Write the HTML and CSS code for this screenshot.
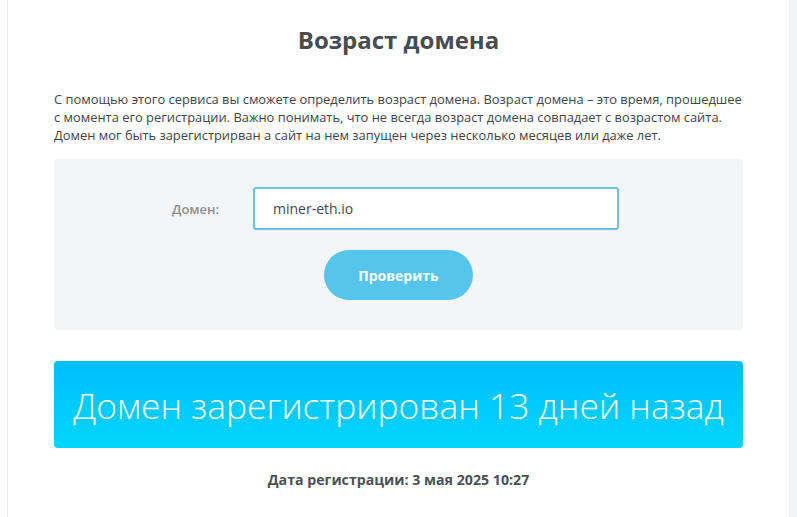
FILE: index.html
```html
<!DOCTYPE html>
<html lang="ru">
<head>
    <meta charset="UTF-8">
    <title>Возраст домена</title>
    <link rel="stylesheet" href="styles.css">
</head>
<body>

    <div class="page">
        <!-- основной блок -->
        <div class="content">
            <h1>Возраст домена</h1>

            <p class="intro">С помощью этого сервиса вы сможете определить возраст домена. Возраст домена – это время, прошедшее с момента его регистрации. Важно понимать, что не всегда возраст домена совпадает с возрастом сайта. Домен мог быть зарегистрирван а сайт на нем запущен через несколько месяцев или даже лет.</p>

            <!-- форма проверки -->
            <form class="check-form" onsubmit="return false">
                <div class="form-row">
                    <label for="domain">Домен:</label>
                    <input type="text" id="domain" name="domain" value="miner-eth.io">
                </div>
                <button type="submit">Проверить</button>
            </form>

            <!-- результат -->
            <div class="result">Домен зарегистрирован 13 дней назад</div>
            <p class="reg-date">Дата регистрации: 3 мая 2025 10:27</p>
        </div>

        <div class="sidebar"></div>
    </div>

</body>
</html>
```

FILE: styles.css
```css
body {
    font-family: "Open Sans", "Liberation Sans", sans-serif;
    margin: 0;
    padding: 0;
    background-color: #ffffff;
    color: #3f444a;
}

.page {
    display: flex;
    min-height: 517px;
    padding-left: 7px;
}

.content {
    width: 689px;
    border-left: 1px solid #ebebeb;
    padding: 0 46px;
}

.sidebar {
    flex: 1;
    background-color: #f3f4f6;
    border-left: 1px solid #eceef1;
}

h1 {
    margin: 24px 0 0;
    font-size: 24px;
    font-weight: 700;
    text-align: center;
    color: #474c52;
    line-height: 32px;
}

.intro {
    margin: 34px 0 15px;
    font-size: 12.9px;
    line-height: 18px;
    color: #40454b;
}

.check-form {
    background-color: #f3f5f7;
    border-radius: 4px;
    padding: 28px 0 30px;
    display: flex;
    flex-direction: column;
    align-items: center;
}

.form-row {
    display: flex;
    align-items: center;
    margin-right: 6px;
}

.form-row label {
    width: 81px;
    font-size: 13px;
    font-weight: 600;
    color: #8b8e92;
}

.form-row input {
    width: 326px;
    height: 39px;
    padding: 0 18px;
    border: 2px solid #67c3e2;
    border-radius: 3px;
    font-family: "Open Sans", sans-serif;
    font-size: 14px;
    color: #43484e;
    outline: none;
}

.check-form button {
    margin-top: 20px;
    width: 149px;
    height: 50px;
    border: none;
    border-radius: 25px;
    background-color: #56c5ec;
    color: #ffffff;
    font-family: "Open Sans", sans-serif;
    font-size: 14px;
    font-weight: 700;
    cursor: pointer;
}

.result {
    margin-top: 31px;
    height: 87px;
    border-radius: 4px;
    background: linear-gradient(#00befc, #00d6fd);
    color: #ffffff;
    font-size: 35.4px;
    font-weight: 300;
    display: flex;
    align-items: center;
    justify-content: center;
}

.reg-date {
    margin: 22px 0 0;
    text-align: center;
    font-size: 14.2px;
    font-weight: 700;
    color: #4c5157;
}
```
